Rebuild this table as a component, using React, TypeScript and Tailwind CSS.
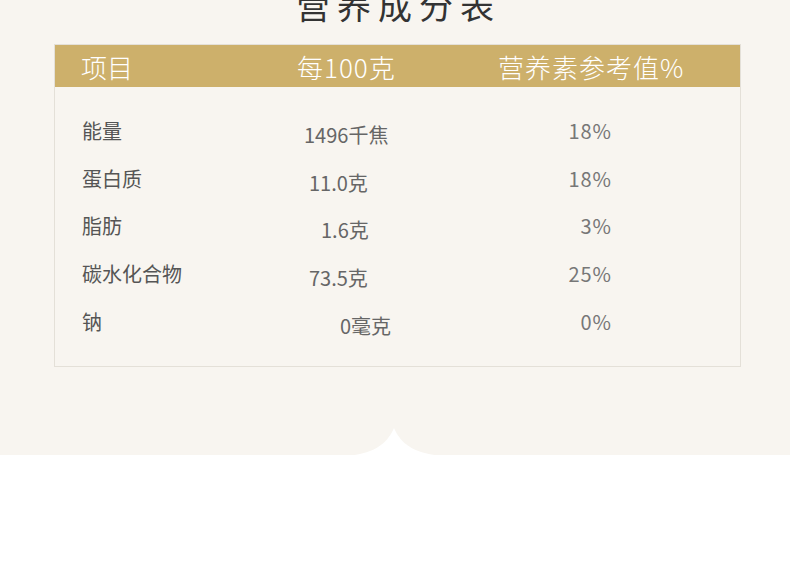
import React from "react";

const rows = [
  { name: "能量", value: "1496千焦", vcls: "pl-[249px] pt-[4px]", pct: "18%" },
  { name: "蛋白质", value: "11.0克", vcls: "pl-[254px] pt-[4px]", pct: "18%" },
  { name: "脂肪", value: "1.6克", vcls: "pl-[266px] pt-[4px]", pct: "3%" },
  { name: "碳水化合物", value: "73.5克", vcls: "pl-[254px] pt-[4px]", pct: "25%" },
  { name: "钠", value: "0毫克", vcls: "pl-[285px] pt-[4px]", pct: "0%" },
];

export default function App() {
  return (
    <div
      className="w-[790px] h-[569px] bg-white overflow-hidden"
      style={{ fontFamily: '"Noto Sans CJK SC", "Noto Sans", sans-serif' }}
    >
      <div className="relative flow-root h-[455px] bg-[#f8f5f0]">
        <div className="flex justify-center -mt-[17px] h-[44px] pl-[7px] text-[34px] leading-[44px] tracking-[7px] text-[#333]">
          营养成分表
        </div>
        <div className="mt-[17px] ml-[54px] w-[687px] h-[323px] border border-[#e4e0d8] bg-[#f8f5f0]">
          <div className="flex items-center h-[42px] bg-[#cdb06b] text-white text-[26px] font-light">
            <div className="w-[241px] pl-[26px]">项目</div>
            <div className="w-[202px] pl-[1px] tracking-[1px]">每100克</div>
            <div className="tracking-[1px]">营养素参考值%</div>
          </div>
          <div className="pt-[31px] flex flex-col">
            {rows.map((r) => (
              <div key={r.name} className="relative flex h-[47.7px] text-[20px] leading-[26px]">
                <div className="absolute left-[27px] top-0 text-[#555]">{r.name}</div>
                <div className={"text-[#666] " + r.vcls}>{r.value}</div>
                <div className="absolute right-[128px] top-0 text-[#777] tracking-[1px]">{r.pct}</div>
              </div>
            ))}
          </div>
        </div>
        <svg className="absolute left-0 top-0" width="790" height="455" viewBox="0 0 790 455">
          <path d="M343 456 C375 455 388 442 394 428 C400 442 413 455 447 456 Z" fill="#ffffff" />
        </svg>
      </div>
    </div>
  );
}
